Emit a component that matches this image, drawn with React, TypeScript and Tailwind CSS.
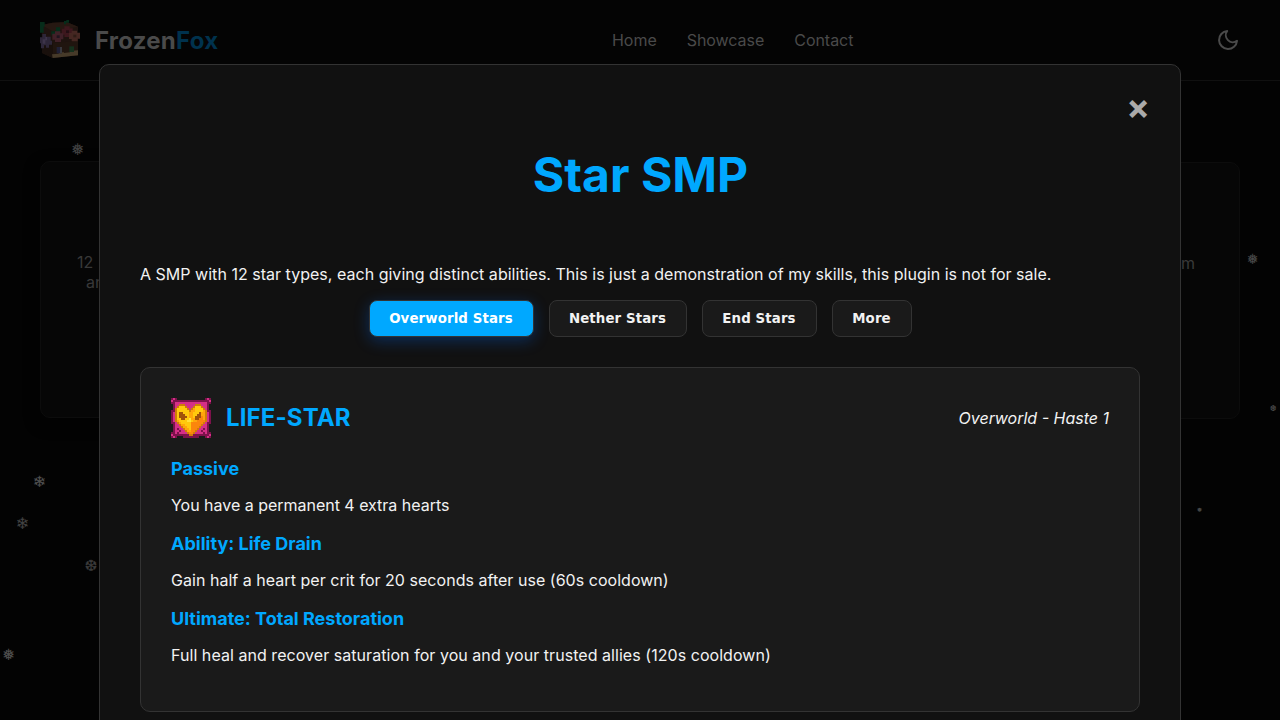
const starRows = [
  "DPD..............DPD",
  "PDDDDDDDDDDDDDDDDDDP",
  "DDPPPPPPPPPPPPPPPPDD",
  ".DPPbbbPPPPPbbbPPPD.",
  ".DPbyyybPPPbyyybPPD.",
  ".DbyyyyybPboyyyybPD.",
  "DDbyyyyyybooyyyyobDD",
  "DPbyBByyyooyyyBoobPD",
  "DPbyBBByyooyyBBoobPD",
  "DPbyBBBByooyBBBOobPD",
  "DPbyyBByywooBBOOobPD",
  "DPboyyyywwyooOOOObPD",
  "DDPboyyyyyOOOOOObPDD",
  ".DPPbooyyyOOOOObPPD.",
  ".DPPPbooyyOOOObPPPD.",
  ".DPDPPbooyOOObPPDPD.",
  ".DPPDPPbooOObPPDPPD.",
  "DDPDPPPPbOObPPPPDPDD",
  "PDDDDDDDDbbDDDDDDDDP",
  "DPD...DDDDDDDD...DPD",
];
const starColors: Record<string, string> = {
  D: "#7c124b", P: "#d42f87", b: "#cf7d08", y: "#ffc90d", o: "#ffa60a",
  O: "#fb860c", B: "#a0520a", w: "#ffe23c",
};

function StarIcon() {
  return (
    <svg className="size-10 shrink-0" viewBox="0 0 20 20" shapeRendering="crispEdges">
      {starRows.flatMap((row, y) =>
        [...row].map((c, x) =>
          c === "." ? null : <rect key={`${x}-${y}`} x={x} y={y} width="1" height="1" fill={starColors[c]} />,
        ),
      )}
    </svg>
  );
}

function Flower({ x, y, fill, core }: { x: number; y: number; fill: string; core: string }) {
  return (
    <g>
      <path d={`M${x - 9} ${y - 16}h16v6h9v18h-7v8h-18v-7h-8v-18h8z`} fill={fill} />
      <path d={`M${x - 4} ${y - 4}h9v8h-9z`} fill={core} />
    </g>
  );
}

function HeadLogo() {
  return (
    <svg className="size-10" viewBox="0 0 120 120">
      <path d="M5 15 38 8 80 6 114 20V106L38 114 6 99z" fill="#1e130f" />
      <path d="M5 15 38 8 80 6 114 20 38 34z" fill="#261812" />
      <path d="M38 70 114 62V106L38 114z" fill="#20150f" />
      <path d="M6 60 38 70V114L6 99z" fill="#19100c" />
      <path d="M36 103 56 101V97H72V99L90 97V93L114 91V106L38 114z" fill="#463a29" />
      <path d="M50 81h16v19H50z" fill="#1f1f34" />
      <path d="M60 81h6v18h-6z" fill="#38383d" />
      <path d="M88 79h14v17H88z" fill="#15311d" />
      <path d="M0 6h14v14h-3v18H0zM72 3h7V0h8v8h-9v5h-6zM48 22h12v14h-8v10H34V34h14z" fill="#062c1a" />
      <path d="M0 52h7V42h11v8h14v12h4v12h-9v9h-9v-7h-6v9H3V70H0z" fill="#2d2638" />
      <path d="M8 58h8v-7h5v10h-5v10H8z" fill="#3d3449" />
      <Flower x={82} y={35} fill="#3d171d" core="#230e13" />
      <Flower x={54} y={50} fill="#402028" core="#1e141e" />
      <Flower x={104} y={48} fill="#452722" core="#2e1c16" />
    </svg>
  );
}

const flakes = [
  { c: "❅", x: 71, y: 141, s: 16, o: 0.25 },
  { c: "❄", x: 33, y: 474, s: 15.5, o: 0.3 },
  { c: "❄", x: 16, y: 515, s: 16, o: 0.25 },
  { c: "❆", x: 84.5, y: 558, s: 15.5, o: 0.22 },
  { c: "❅", x: 2, y: 647, s: 15.5, o: 0.3 },
  { c: "❅", x: 1247, y: 252, s: 14, o: 0.28 },
  { c: "❆", x: 1270, y: 404, s: 8, o: 0.3 },
  { c: "❅", x: 1197, y: 507, s: 6, o: 0.35 },
];

const tabs = [
  { label: "Overworld Stars", width: "w-[165px]" },
  { label: "Nether Stars", width: "w-[138px]" },
  { label: "End Stars", width: "w-[115px]" },
  { label: "More", width: "w-[80px]" },
];

const abilities = [
  { title: "Passive", text: "You have a permanent 4 extra hearts", tracking: "tracking-[-0.02px]" },
  { title: "Ability: Life Drain", text: "Gain half a heart per crit for 20 seconds after use (60s cooldown)", tracking: "tracking-[0.03px]" },
  { title: "Ultimate: Total Restoration", text: "Full heal and recover saturation for you and your trusted allies (120s cooldown)", tracking: "tracking-[0.05px]" },
];

export default function App() {
  return (
    <div className="relative h-[720px] w-full overflow-hidden bg-[#030303] font-['Inter','DejaVu_Sans',sans-serif] text-base">
      <header className="flex h-[81px] items-center border-b border-[#101010] bg-[#040404] px-10 text-[#4a4a4a]">
        <div className="flex w-[572px] items-center gap-[15px]">
          <HeadLogo />
          <span className="pt-[2px] text-2xl font-bold tracking-[0.25px]">Frozen<span className="text-[#00324d]">Fox</span></span>
        </div>
        <nav className="flex flex-1 gap-[30px] tracking-[-0.04px]">
          <a>Home</a>
          <a>Showcase</a>
          <a>Contact</a>
        </nav>
        <svg className="size-6" viewBox="0 0 24 24" fill="none" stroke="currentColor" strokeWidth="2" strokeLinecap="round" strokeLinejoin="round">
          <path d="M21 12.79A9 9 0 1 1 11.21 3 7 7 0 0 0 21 12.79z" />
        </svg>
      </header>

      <main className="flex items-start justify-between px-10 pt-20 leading-5 text-[#393939]">
        <section className="h-[257px] w-[380px] rounded-[10px] border border-[#0c0c0c] bg-[#060606] px-9 pt-[90px] shadow-[0_5px_15px_rgba(0,0,0,0.5)]">
          <p className="w-6">12</p>
          <p className="w-5 pl-[9px]">and</p>
        </section>
        <section className="mt-px h-[257px] w-[380px] rounded-[10px] border border-[#0c0c0c] bg-[#060606] px-11 pt-[90px] text-right">
          <p>m</p>
        </section>
      </main>

      {flakes.map((f, i) => (
        <span key={i} className="absolute leading-none text-white" style={{ left: f.x, top: f.y, fontSize: f.s, opacity: f.o }}>
          {f.c}
        </span>
      ))}

      <div className="absolute inset-x-[99px] top-16 h-[800px] rounded-[10px] border border-[#333] bg-[#111] px-10 text-[#f2f2f2]">
        <button className="absolute top-[19px] right-[30px] text-[35px] leading-[44px] font-bold text-[#aaa]">×</button>
        <h1 className="pt-20 pl-px text-center text-5xl leading-[60px] font-bold text-[#00a8ff]">Star SMP</h1>
        <p className="mt-[57px] leading-6 tracking-[0.022px]">A SMP with 12 star types, each giving distinct abilities. This is just a demonstration of my skills, this plugin is not for sale.</p>
        <div className="mt-[14px] flex justify-center gap-[15px] font-['DejaVu_Sans',sans-serif] text-[13.333px] leading-[15px] font-semibold tracking-[0.12px]">
          {tabs.map((tab, i) => (
            <button
              key={tab.label}
              className={`h-[37px] rounded-lg border border-[#333] whitespace-nowrap ${tab.width} ${i === 0 ? "bg-[#00a8ff] text-white shadow-[0_4px_15px_rgba(0,110,255,0.3)]" : "bg-[#1a1a1a]"}`}
            >
              {tab.label}
            </button>
          ))}
        </div>
        <article className="mt-[30px] h-[345px] rounded-[10px] border border-[#333] bg-[#1a1a1a] px-[30px] pt-[30px]">
          <div className="flex items-center">
            <StarIcon />
            <h2 className="ml-[15px] flex-1 text-2xl leading-[40px] font-bold tracking-[0.12px] text-[#00a8ff]">LIFE-STAR</h2>
            <em>Overworld - Haste 1</em>
          </div>
          <div className="mt-[11px]">
            {abilities.map((a) => (
              <section key={a.title} className="h-[75px]">
                <h3 className="text-lg leading-10 font-bold text-[#00a8ff]">{a.title}</h3>
                <p className={`mt-1 leading-6 ${a.tracking}`}>{a.text}</p>
              </section>
            ))}
          </div>
        </article>
      </div>
    </div>
  );
}
